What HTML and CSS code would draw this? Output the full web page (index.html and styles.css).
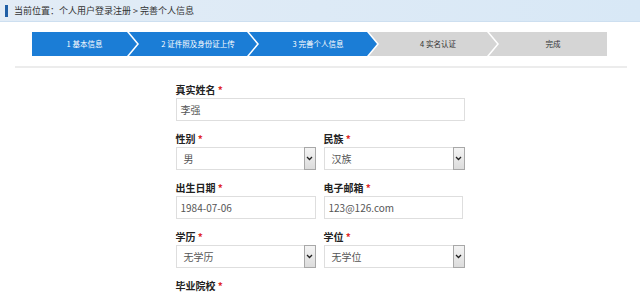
FILE: index.html
```html
<!DOCTYPE html>
<html lang="zh-CN">
<head>
<meta charset="utf-8">
<title>完善个人信息</title>
<link rel="stylesheet" href="styles.css">
</head>
<body>
<div class="crumb">
  <span class="crumb-mark"></span>
  <span class="crumb-text">当前位置：个人用户登录注册 &gt; 完善个人信息</span>
</div>
<div class="panel">
  <div class="steps-wrap">
    <div class="steps">
      <div class="step step-first done">1 基本信息</div>
      <div class="step done">2 证件照及身份证上传</div>
      <div class="step done">3 完善个人信息</div>
      <div class="step todo">4 实名认证</div>
      <div class="step step-last todo">完成</div>
    </div>
  </div>
  <form class="form">
    <div class="field">
      <div class="label">真实姓名 <span class="req">*</span></div>
      <div class="input">李强</div>
    </div>
    <div class="row">
      <div class="field">
        <div class="label">性别 <span class="req">*</span></div>
        <div class="select"><span class="val">男</span><span class="btn"><svg width="7" height="5" viewBox="0 0 7 5"><path d="M1 1 L3.5 3.5 L6 1" fill="none" stroke="#222" stroke-width="1.3"/></svg></span></div>
      </div>
      <div class="field">
        <div class="label">民族 <span class="req">*</span></div>
        <div class="select"><span class="val">汉族</span><span class="btn"><svg width="7" height="5" viewBox="0 0 7 5"><path d="M1 1 L3.5 3.5 L6 1" fill="none" stroke="#222" stroke-width="1.3"/></svg></span></div>
      </div>
    </div>
    <div class="row">
      <div class="field">
        <div class="label">出生日期 <span class="req">*</span></div>
        <div class="input">1984-07-06</div>
      </div>
      <div class="field">
        <div class="label">电子邮箱 <span class="req">*</span></div>
        <div class="input input-short">123@126.com</div>
      </div>
    </div>
    <div class="row">
      <div class="field">
        <div class="label">学历 <span class="req">*</span></div>
        <div class="select"><span class="val">无学历</span><span class="btn"><svg width="7" height="5" viewBox="0 0 7 5"><path d="M1 1 L3.5 3.5 L6 1" fill="none" stroke="#222" stroke-width="1.3"/></svg></span></div>
      </div>
      <div class="field">
        <div class="label">学位 <span class="req">*</span></div>
        <div class="select"><span class="val">无学位</span><span class="btn"><svg width="7" height="5" viewBox="0 0 7 5"><path d="M1 1 L3.5 3.5 L6 1" fill="none" stroke="#222" stroke-width="1.3"/></svg></span></div>
      </div>
    </div>
    <div class="field">
      <div class="label">毕业院校 <span class="req">*</span></div>
    </div>
  </form>
</div>
</body>
</html>
```
FILE: styles.css
```css
html, body {
  margin: 0;
  padding: 0;
  background: #fff;
}
body {
  font-family: "Noto Sans CJK SC", "Noto Sans", "Liberation Sans", sans-serif;
  color: #333;
  overflow: hidden;
}
.crumb {
  height: 21px;
  display: flex;
  align-items: center;
  background: linear-gradient(to right, #e2ecf6, #d8e8f6);
  border-bottom: 1px solid #cddff0;
}
.crumb-mark {
  width: 3px;
  height: 12px;
  background: #1f5fa6;
  margin-left: 5px;
  margin-right: 6px;
}
.crumb-text {
  font-size: 9px;
  color: #333;
  line-height: 12px;
}
.panel {
  padding: 0 3px;
}
.steps-wrap {
  margin: 0 10px 0 12px;
  padding: 10px 0 10px 17px;
  border-bottom: 2px solid #ececec;
}
.steps {
  display: flex;
  height: 24px;
}
.step {
  height: 24px;
  line-height: 24px;
  font-size: 7.5px;
  text-align: center;
  width: 128px;
  margin-left: -8px;
  padding-left: 10px;
  box-sizing: border-box;
  clip-path: polygon(0 0, calc(100% - 10px) 0, 100% 50%, calc(100% - 10px) 100%, 0 100%, 10px 50%);
}
.step-first {
  width: 105px;
  margin-left: 0;
  padding-left: 0;
  clip-path: polygon(0 0, calc(100% - 10px) 0, 100% 50%, calc(100% - 10px) 100%, 0 100%);
}
.step-last {
  width: 118px;
  clip-path: polygon(0 0, 100% 0, 100% 100%, 0 100%, 10px 50%);
}
.done {
  background: #1b7dd6;
  color: #fff;
}
.todo {
  background: #d5d5d5;
  color: #333;
}
.form {
  width: 289px;
  margin: 0 auto;
  padding-top: 14px;
}
.row {
  display: grid;
  grid-template-columns: 140px 141px;
  column-gap: 8px;
}
.field {
  margin-bottom: 10px;
}
.label {
  font-size: 10px;
  font-weight: bold;
  line-height: 16px;
  color: #222;
}
.req {
  color: #e02828;
}
.input {
  height: 23px;
  box-sizing: border-box;
  border: 1px solid #dedede;
  font-size: 10px;
  line-height: 21px;
  padding-left: 4px;
  color: #555;
}
.input-short {
  width: 139px;
}
.select {
  height: 23px;
  box-sizing: border-box;
  border: 1px solid #dedede;
  display: flex;
  font-size: 10px;
  color: #555;
}
.select .val {
  flex: 1;
  line-height: 21px;
  padding-left: 7px;
}
.select .btn {
  width: 10px;
  border: 1px solid #a8a8a8;
  margin: -1px -1px -1px 0;
  background: linear-gradient(#f4f4f4, #dcdcdc);
  display: flex;
  align-items: center;
  justify-content: center;
}
```
